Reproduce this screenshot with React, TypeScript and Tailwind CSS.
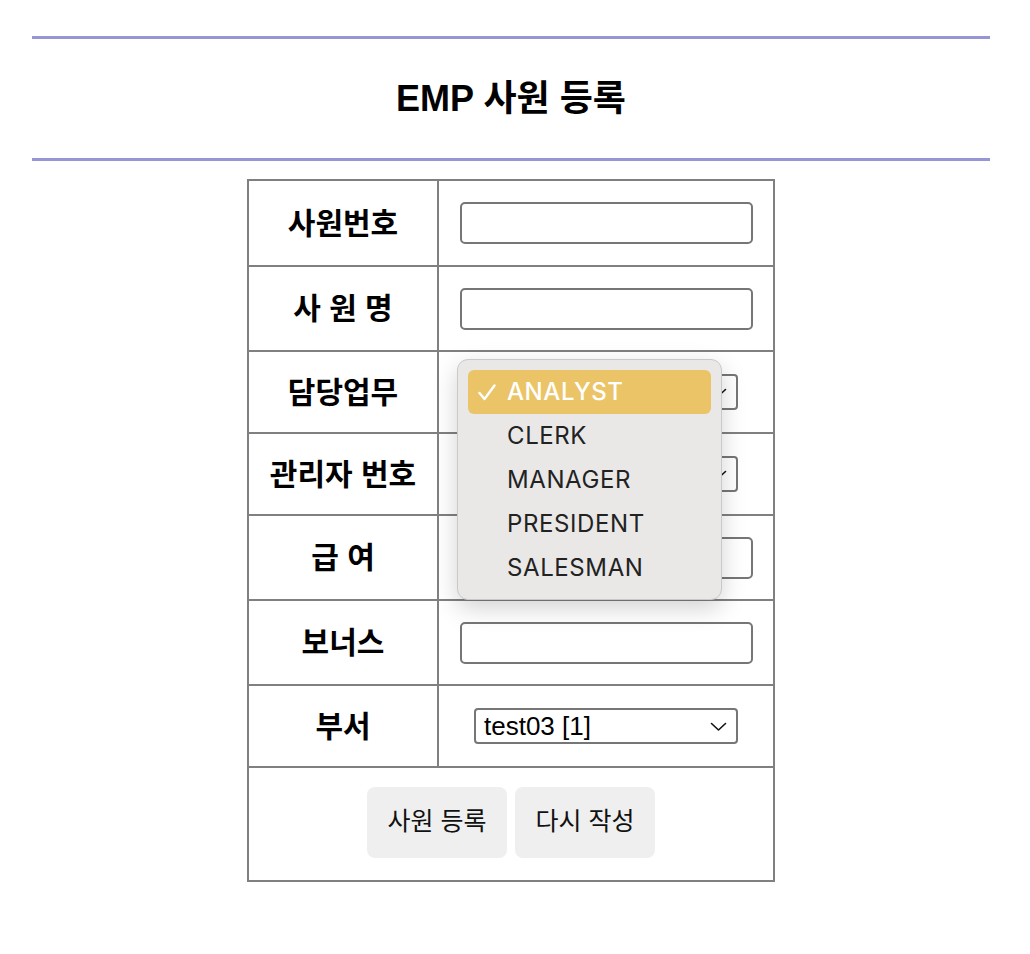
import React from "react";

const font = { fontFamily: '"Liberation Sans", "Noto Sans CJK KR", sans-serif' };

function Chevron({ className }: { className?: string }) {
  return (
    <svg className={className} width="17" height="10" viewBox="0 0 17 10" fill="none">
      <path d="M1.5 1.5 L8.5 8 L15.5 1.5" stroke="#111" strokeWidth="1.6" strokeLinecap="round" strokeLinejoin="round" />
    </svg>
  );
}

function FakeSelect({ value, chevronRight = "right-[9px]" }: { value?: string; chevronRight?: string }) {
  return (
    <div className="relative w-[264px] h-[36px] rounded-[4px] border-2 border-[#767676] bg-white flex items-center pl-[8px]">
      {value && <span className="text-[26px] leading-none text-black">{value}</span>}
      <Chevron className={`absolute top-[12px] ${chevronRight}`} />
    </div>
  );
}

function TextInput() {
  return (
    <input
      type="text"
      className="w-[293px] h-[42px] rounded-[5px] border-2 border-[#767676] bg-white outline-none"
    />
  );
}

function Row({
  label,
  h,
  first,
  children,
}: {
  label: string;
  h: string;
  first?: boolean;
  children: React.ReactNode;
}) {
  return (
    <div className={`flex ${h} ${first ? "" : "border-t-2 border-[#808080]"}`}>
      <div className="w-[190px] flex items-center justify-center border-r-2 border-[#808080]">
        <span className="text-[30px] font-bold text-black whitespace-pre">{label}</span>
      </div>
      <div className="flex-1 flex items-center justify-center">{children}</div>
    </div>
  );
}

export default function App() {
  const options = ["ANALYST", "CLERK", "MANAGER", "PRESIDENT", "SALESMAN"];
  return (
    <div className="w-[1030px] h-[954px] bg-white" style={font}>
      <div className="pt-[36px] pl-[32px] w-[990px]">
        <div className="h-[3px] bg-[#9696d6]" />
        <div className="h-[119px] flex items-center justify-center">
          <h1 className="text-[36px] font-bold text-black">EMP 사원 등록</h1>
        </div>
        <div className="h-[3px] bg-[#9696d6]" />
      </div>

      <div className="relative mt-[18px] ml-[247px] w-[528px] border-2 border-[#808080]">
        <Row label="사원번호" h="h-[84px]" first>
          <TextInput />
        </Row>
        <Row label="사 원 명" h="h-[85px]">
          <TextInput />
        </Row>
        <Row label="담당업무" h="h-[82px]">
          <FakeSelect />
        </Row>
        <Row label="관리자 번호" h="h-[82px]">
          <FakeSelect />
        </Row>
        <Row label="급 여" h="h-[85px]">
          <TextInput />
        </Row>
        <Row label="보너스" h="h-[85px]">
          <TextInput />
        </Row>
        <Row label="부서" h="h-[82px]">
          <FakeSelect value="test03 [1]" />
        </Row>
        <div className="h-[114px] border-t-2 border-[#808080] flex items-center justify-center gap-[8px] pb-[4px]">
          <button className="w-[140px] h-[71px] rounded-[8px] bg-[#efefef] text-[25px] text-[#111]">사원 등록</button>
          <button className="w-[140px] h-[71px] rounded-[8px] bg-[#efefef] text-[25px] text-[#111]">다시 작성</button>
        </div>

        {/* open dropdown menu */}
        <div
          className="absolute left-[208px] top-[178px] w-[265px] h-[241px] rounded-[11px] bg-[#e9e8e7] border border-[#c9c9c9] shadow-[0_8px_24px_rgba(0,0,0,0.18)] p-[10px]"
          style={{ fontFamily: 'Inter, "Noto Sans", sans-serif' }}
        >
          {options.map((o, i) => (
            <div
              key={o}
              className={`relative h-[44px] flex items-center pl-[39px] text-[24px] tracking-[0.6px] ${
                i === 0 ? "bg-[#ebc468] rounded-[6px] text-white font-medium" : "text-[#222]"
              }`}
            >
              {i === 0 && (
                <svg className="absolute left-[10px] top-[14px]" width="18" height="17" viewBox="0 0 18 17" fill="none">
                  <path d="M1.5 9 L6.5 15 L16.5 1.5" stroke="white" strokeWidth="2.4" strokeLinecap="round" strokeLinejoin="round" />
                </svg>
              )}
              {o}
            </div>
          ))}
        </div>
      </div>
    </div>
  );
}
